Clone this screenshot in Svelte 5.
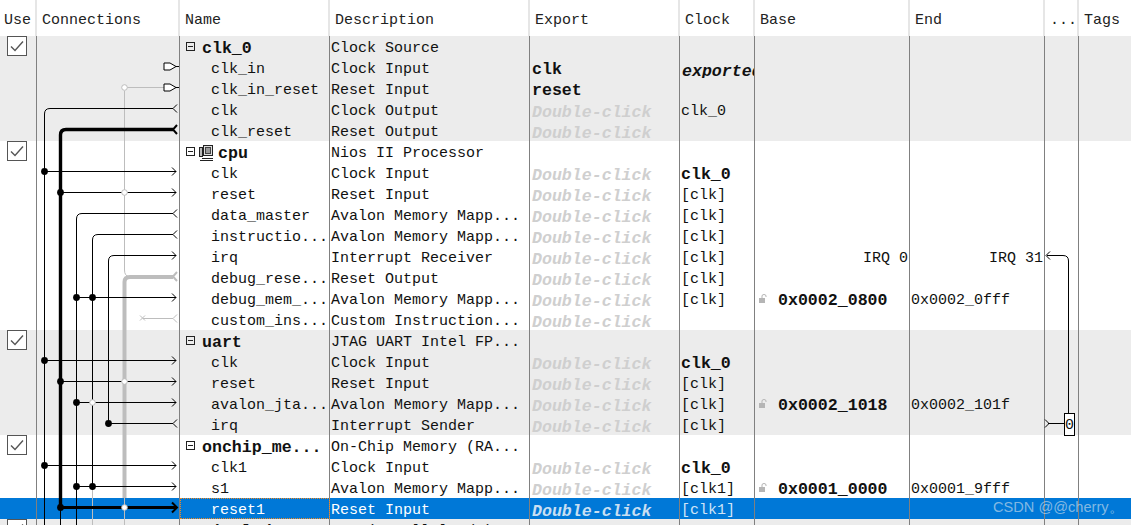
<script>
  const dc = 'Double-click';
  const columns = ['Use', 'Connections', 'Name', 'Description', 'Export', 'Clock', 'Base', 'End', '...', 'Tags'];

  const rows = [
    { group: true, check: true, shade: true, name: 'clk_0', desc: 'Clock Source' },
    { shade: true, name: 'clk_in', desc: 'Clock Input', exp: 'clk', expBold: true, clock: 'exported', clockItalic: true },
    { shade: true, name: 'clk_in_reset', desc: 'Reset Input', exp: 'reset', expBold: true },
    { shade: true, name: 'clk', desc: 'Clock Output', exp: dc, clock: 'clk_0' },
    { shade: true, name: 'clk_reset', desc: 'Reset Output', exp: dc },
    { group: true, check: true, cpu: true, name: 'cpu', desc: 'Nios II Processor' },
    { name: 'clk', desc: 'Clock Input', exp: dc, clock: 'clk_0', clockBold: true },
    { name: 'reset', desc: 'Reset Input', exp: dc, clock: '[clk]' },
    { name: 'data_master', desc: 'Avalon Memory Mapp...', exp: dc, clock: '[clk]' },
    { name: 'instructio...', desc: 'Avalon Memory Mapp...', exp: dc, clock: '[clk]' },
    { name: 'irq', desc: 'Interrupt Receiver', exp: dc, clock: '[clk]', irq: ['IRQ 0', 'IRQ 31'] },
    { name: 'debug_rese...', desc: 'Reset Output', exp: dc, clock: '[clk]' },
    { name: 'debug_mem_...', desc: 'Avalon Memory Mapp...', exp: dc, clock: '[clk]', base: '0x0002_0800', end: '0x0002_0fff' },
    { name: 'custom_ins...', desc: 'Custom Instruction...', exp: dc },
    { group: true, check: true, shade: true, name: 'uart', desc: 'JTAG UART Intel FP...' },
    { shade: true, name: 'clk', desc: 'Clock Input', exp: dc, clock: 'clk_0', clockBold: true },
    { shade: true, name: 'reset', desc: 'Reset Input', exp: dc, clock: '[clk]' },
    { shade: true, name: 'avalon_jta...', desc: 'Avalon Memory Mapp...', exp: dc, clock: '[clk]', base: '0x0002_1018', end: '0x0002_101f' },
    { shade: true, name: 'irq', desc: 'Interrupt Sender', exp: dc, clock: '[clk]' },
    { group: true, check: true, name: 'onchip_me...', desc: 'On-Chip Memory (RA...' },
    { name: 'clk1', desc: 'Clock Input', exp: dc, clock: 'clk_0', clockBold: true },
    { name: 's1', desc: 'Avalon Memory Mapp...', exp: dc, clock: '[clk1]', base: '0x0001_0000', end: '0x0001_9fff' },
    { selected: true, name: 'reset1', desc: 'Reset Input', exp: dc, clock: '[clk1]' },
    { group: true, check: true, shade: true, name: 'pio_led', desc: 'PIO (Parallel I/O)' }
  ];

  // connection dots, x = bus line, y = wire
  const dots = [
    [44.5, 171.5], [60.5, 192.5], [76.5, 297.5], [92.5, 297.5],
    [44.5, 360.5], [60.5, 381.5], [76.5, 402.5], [108.5, 423.5],
    [44.5, 465.5], [76.5, 486.5], [92.5, 486.5], [60.5, 507.5]
  ];
  const hollow = [[124.5, 87.5], [124.5, 192.5], [124.5, 381.5], [92.5, 402.5], [124.5, 507.5]];
  const inputs = [171.5, 192.5, 297.5, 360.5, 381.5, 402.5, 465.5, 486.5];
</script>

<div class="page">
  <div class="head">
    {#each columns as col}
      <div class="hcell">{col}</div>
    {/each}
  </div>

  <div class="body">
    {#each rows as row}
      <div class="row" class:shade={row.shade} class:selected={row.selected}>
        <div class="cell use">
          {#if row.check}
            <svg class="check" width="20" height="20" viewBox="0 0 20 20">
              <rect x="0.5" y="0.5" width="19" height="19" fill="#fff" stroke="#555" />
              <path d="M4 10.5 L8 14.5 L16 5.5" fill="none" stroke="#555" stroke-width="1.4" />
            </svg>
          {/if}
        </div>
        <div class="cell"></div>
        <div class="cell name" class:focus={row.selected}>
          {#if row.group}
            <svg class="expander" width="9" height="9" viewBox="0 0 9 9">
              <rect x="0.5" y="0.5" width="8" height="8" fill="none" stroke="#222" />
              <path d="M2 4.5 H7" stroke="#222" />
            </svg>
            {#if row.cpu}
              <svg class="cpu" width="15" height="16" viewBox="0 0 15 16">
                <rect x="4.5" y="0.5" width="9" height="10" fill="#ddd" stroke="#222" />
                <rect x="6.5" y="2.5" width="5" height="6" fill="#999" stroke="#444" />
                <rect x="0.5" y="2.5" width="3" height="9" fill="#bbb" stroke="#222" />
                <path d="M3 13.5 H14 M1 15.5 H14" stroke="#222" />
              </svg>
            {/if}
            <b>{row.name}</b>
          {:else}
            <span class="port">{row.name}</span>
          {/if}
        </div>
        <div class="cell desc">{row.desc}</div>
        <div class="cell export">
          {#if row.exp === dc}
            <span class="hint">{row.exp}</span>
          {:else if row.exp}
            <b>{row.exp}</b>
          {/if}
        </div>
        <div class="cell clock">
          {#if row.clockItalic}
            <b class="exported">{row.clock}</b>
          {:else if row.clockBold}
            <b>{row.clock}</b>
          {:else if row.clock}
            {row.clock}
          {/if}
        </div>
        <div class="cell base">
          {#if row.base}
            <svg class="lock" width="10" height="9" viewBox="0 0 10 9">
              <rect x="0" y="4" width="6" height="5" fill="#b5b5b5" />
              <path d="M3 4 V2 Q3 0.5 5 0.5 Q7 0.5 7 2 V3" fill="none" stroke="#b5b5b5" />
            </svg>
            <b>{row.base}</b>
          {:else if row.irq}
            <span class="irq">{row.irq[0]}</span>
          {/if}
        </div>
        <div class="cell end">
          {#if row.end}
            {row.end}
          {:else if row.irq}
            <span class="irq">{row.irq[1]}</span>
          {/if}
        </div>
        <div class="cell"></div>
        <div class="cell last"></div>
      </div>
    {/each}
  </div>

  <!-- connection wires, same coordinates as the page -->
  <svg class="wires" width="1131" height="525" viewBox="0 0 1131 525">
    <g fill="none" stroke="#bdbdbd">
      <path d="M124.5 91 V270 Q124.5 276 129 276.5" />
      <path d="M124.5 87.5 H165" />
      <path d="M143 318.5 H173" />
      <path d="M140 315.5 L145 320.5 M145 315.5 L140 320.5" />
      <path d="M177 314.5 L173 318.5 L177 322.5" />
      <path d="M124.5 498 V525" />
      <path d="M92.5 489 V525" />
      <path d="M124.5 498 V282 Q124.5 277 130 277 H173" stroke-width="4" />
      <path d="M177 272 L173 276.5 L177 281" stroke-width="2" />
    </g>

    <g fill="none" stroke="#000">
      <path d="M173 108.5 H50 Q44.5 108.5 44.5 114 V525" />
      <path d="M173 213.5 H82 Q76.5 213.5 76.5 219 V525" />
      <path d="M173 234.5 H98 Q92.5 234.5 92.5 240 V486" />
      <path d="M176 255.5 H114 Q108.5 255.5 108.5 261 V423" />
      <path d="M60.5 508 V525" />
      <path d="M44.5 171.5 H176 M60.5 192.5 H176 M76.5 297.5 H176" />
      <path d="M44.5 360.5 H176 M60.5 381.5 H176 M76.5 402.5 H176" />
      <path d="M108.5 423.5 H173 M44.5 465.5 H176 M76.5 486.5 H176" />
      <path d="M177 104.5 L173 108.5 L177 112.5" />
      <path d="M177 209.5 L173 213.5 L177 217.5" />
      <path d="M177 230.5 L173 234.5 L177 238.5" />
      <path d="M177 419.5 L173 423.5 L177 427.5" />
      <path d="M172 251.5 L176 255.5 L172 259.5" />
      {#each inputs as y}
        <path d="M172 {y - 4} L176 {y} L172 {y + 4}" />
      {/each}

      <path d="M173 129.5 H66 Q60.5 129.5 60.5 135 V508" stroke-width="3.4" />
      <path d="M177 125 L173 129.5 L177 134" stroke-width="2" />
      <path d="M60.5 507.5 H176" stroke-width="3" />
      <path d="M172 502.5 L177 507.5 L172 512.5" stroke-width="2" />

      <!-- irq bridge in the ... column -->
      <path d="M1047 255.5 H1063 Q1068.5 255.5 1068.5 261 V413" />
      <path d="M1050 251.5 L1046 255.5 L1050 259.5" />
      <path d="M1048 423.5 H1065" />
      <path d="M1045 419.5 L1049 423.5 L1045 427.5" />
      <rect x="1064.5" y="413.5" width="10" height="22" fill="#fff" />
    </g>

    <g fill="none">
      <path d="M164 84 H170 L176 87.5 L170 91 H164 Z" stroke="#000" fill="#fff" />
      <path d="M164 63 H170 L176 66.5 L170 70 H164 Z" stroke="#000" fill="#fff" />
      <path d="M176 66.5 H179 M176 87.5 H179" stroke="#000" />
    </g>

    {#each dots as [x, y]}
      <circle cx={x} cy={y} r="3.4" fill="#000" />
    {/each}
    {#each hollow as [x, y]}
      <circle cx={x} cy={y} r="2.8" fill="#fff" stroke="#bdbdbd" />
    {/each}

    <text x="1069.5" y="429" text-anchor="middle" class="zero">0</text>
  </svg>

  <div class="mark">CSDN @@cherry。</div>
</div>

<style>
  :global(body) { margin: 0; background: #fff; overflow: hidden; }

  .page {
    position: relative;
    width: 1131px;
    height: 525px;
    overflow: hidden;
    font-family: "Liberation Mono", monospace;
    font-size: 15px;
    color: #111;
  }

  .head, .row {
    display: grid;
    grid-template-columns: 37px 143px 150px 200px 150px 75px 155px 135px 34px 52px;
  }

  .head { height: 36px; }
  .hcell {
    box-sizing: border-box;
    padding: 12px 0 0 5px;
    border-right: 2px solid #e6e6e6;
    line-height: 18px;
    white-space: nowrap;
    color: #222;
  }
  .hcell:first-child { padding-left: 4px; }
  .hcell:last-child { border-right: 0; }

  .row { height: 21px; }
  .row.shade { background: #ececec; }
  .row.selected { background: #0078d7; color: #fff; }

  .cell {
    box-sizing: border-box;
    height: 21px;
    padding-top: 4px;
    border-right: 1px solid #808080;
    line-height: 17px;
    white-space: nowrap;
    display: flex;
    align-items: center;
  }
  .cell.last { border-right: 0; }

  .use { align-items: flex-start; padding-top: 0; }
  .check { margin-left: 7px; position: relative; }

  .name { padding-left: 5px; }
  .name.focus { outline: 1px dotted #f08a24; outline-offset: -1px; }
  .expander { flex: none; margin: -4px 7px 0 1px; }
  .cpu { flex: none; margin: 0 4px 2px -3px; }
  .port { margin-left: 26px; }

  b {
    font-size: 16.6px;
    font-weight: 700;
    line-height: 17px;
  }

  .desc { padding-left: 1px; }
  .export { padding-left: 2px; }
  .clock { padding-left: 1px; overflow: hidden; }
  .exported { font-style: italic; margin-left: 1px; padding-top: 4px; }
  .base { padding-left: 3px; }
  .lock { flex: none; margin: -4px 9px 0 1px; }
  .end { padding-left: 1px; }

  .hint {
    font-size: 16.6px;
    font-weight: 700;
    font-style: italic;
    line-height: 14px;
    color: #cfcfcf;
    padding-top: 3px;
  }
  .selected .hint { color: #c9dff2; }
  .selected .clock { color: #cfe4f7; }

  .irq { margin-left: auto; padding-right: 1px; }

  .wires {
    position: absolute;
    left: 0;
    top: 0;
    pointer-events: none;
  }
  .zero {
    font-family: "Liberation Mono", monospace;
    font-size: 15px;
    fill: #111;
  }

  .mark {
    position: absolute;
    left: 993px;
    top: 498px;
    font-family: "Liberation Sans", sans-serif;
    font-size: 14.6px;
    line-height: 18px;
    color: rgba(215, 225, 235, 0.62);
    white-space: nowrap;
  }
</style>
